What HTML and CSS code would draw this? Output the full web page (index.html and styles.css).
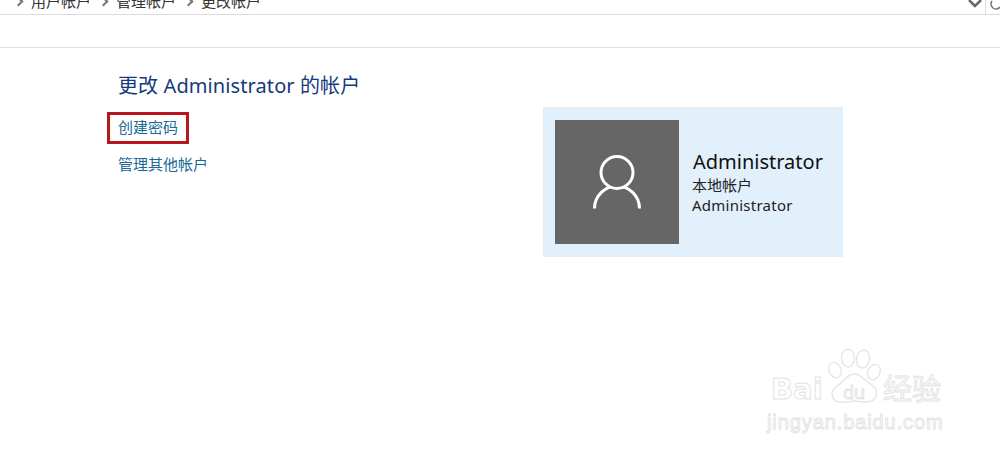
FILE: index.html
```html
<!DOCTYPE html>
<html lang="zh-CN">
<head>
    <meta charset="UTF-8">
    <title>更改帐户</title>
    <link rel="stylesheet" href="styles.css">
</head>
<body>

    <div class="address-bar">
        <nav class="crumbs">
            <span class="sep"></span>
            <span>用户帐户</span>
            <span class="sep"></span>
            <span>管理帐户</span>
            <span class="sep"></span>
            <span>更改帐户</span>
        </nav>
        <div class="bar-tools">
            <svg class="chevron" width="14" height="8" viewBox="0 0 14 8"><path d="M1 0l6 6 6-6" fill="none" stroke="#666" stroke-width="2.500"/></svg>
            <span class="tool-divider"></span>
            <svg class="refresh" width="10" height="10" viewBox="0 0 10 10"><path d="M10 7A5 5 0 0 1 2 1" fill="none" stroke="#777" stroke-width="1.500"/></svg>
        </div>
    </div>
    <div class="menu-bar"></div>

    <main class="page">
        <section class="tasks">
            <h1>更改 Administrator 的帐户</h1>
            <a href="#" class="task task-marked">创建密码</a>
            <a href="#" class="task">管理其他帐户</a>
        </section>
        <section class="user-card">
            <div class="avatar">
                <svg width="48" height="54" viewBox="0 0 48 54">
                    <path d="M1.5 53.500a22.500 22.500 0 0 1 45 0" fill="none" stroke="#fff" stroke-width="3"/>
                    <circle cx="24" cy="17.500" r="16" fill="#666" stroke="#fff" stroke-width="3"/>
                </svg>
            </div>
            <div class="user-info">
                <div class="user-name">Administrator</div>
                <div class="user-line">本地帐户</div>
                <div class="user-line user-login">Administrator</div>
            </div>
        </section>
    </main>

    <div class="watermark">
        <div class="wm-top">
            <span class="wm-bai">Bai</span>
            <svg class="wm-paw" width="56" height="58" viewBox="0 0 56 58">
                <g fill="#fff" stroke="#e4e4e4" stroke-width="1.3">
                    <ellipse cx="8" cy="22" rx="6" ry="8" transform="rotate(-25 8 22)"/>
                    <ellipse cx="21" cy="10" rx="6.500" ry="9"/>
                    <ellipse cx="36" cy="11" rx="6.500" ry="9" transform="rotate(12 36 11)"/>
                    <ellipse cx="47" cy="24" rx="6" ry="8" transform="rotate(25 47 24)"/>
                    <path d="M27 26c7 0 10 6 18 11 8 6 5 17-6 17-5 0-8-1-12-1s-7 2-13 1C4 54 2 44 10 38c7-4 10-12 17-12z"/>
                </g>
            </svg>
            <span class="wm-du">du</span>
            <span class="wm-cn">经验</span>
        </div>
        <div class="wm-url">jingyan.baidu.com</div>
    </div>

</body>
</html>
```

FILE: styles.css
```css
body {
    font-family: "Noto Sans", "Noto Sans CJK SC", sans-serif;
    background-color: #fff;
    margin: 0;
    height: 456px;
    overflow: hidden;
    position: relative;
}

.address-bar {
    height: 14px;
    border-bottom: 1px solid #dcdcdc;
    display: flex;
    justify-content: space-between;
    align-items: flex-end;
    overflow: hidden;
}

.crumbs {
    display: flex;
    align-items: center;
    gap: 9px;
    font-size: 15px;
    line-height: 20px;
    color: #333;
    margin-bottom: 3px;
    padding-left: 15px;
}

.sep {
    width: 5px;
    height: 5px;
    border-top: 2px solid #777;
    border-right: 2px solid #777;
    transform: rotate(45deg);
}

.bar-tools {
    display: flex;
    align-items: flex-start;
    height: 14px;
}

.chevron {
    margin-right: 3px;
}

.tool-divider {
    width: 1px;
    height: 14px;
    background-color: #ddd;
}

.refresh {
    margin-left: 4px;
}

.menu-bar {
    height: 32px;
    border-bottom: 1px solid #e3e3e3;
}

.page {
    display: flex;
}

.tasks {
    width: 425px;
    padding-left: 118px;
    padding-top: 25px;
    display: flex;
    flex-direction: column;
    align-items: flex-start;
}

.tasks h1 {
    margin: 0 0 13px;
    font-size: 20px;
    font-weight: normal;
    line-height: 26px;
    letter-spacing: 0.1px;
    color: #143a7c;
}

.task {
    font-size: 15px;
    line-height: 20px;
    color: #1b6a94;
    text-decoration: none;
}

.task-marked {
    border: 3px solid #b8161c;
    padding: 2px 8px 4px;
    margin: 0 0 10px -11px;
}

.user-card {
    width: 300px;
    height: 150px;
    margin-top: 59px;
    background-color: #e2f0fb;
    display: flex;
    align-items: center;
    gap: 13px;
    padding-left: 12px;
    box-sizing: border-box;
}

.avatar {
    width: 124px;
    height: 124px;
    background-color: #666;
    display: flex;
    justify-content: center;
    align-items: center;
}

.user-name {
    margin-left: 1px;
    font-size: 20px;
    line-height: 26px;
    color: #111;
}

.user-line {
    font-size: 15px;
    line-height: 20px;
    color: #222;
}

.user-login {
    letter-spacing: 0.25px;
}

/* faint logo stamped over the corner */
.watermark {
    position: absolute;
    left: 767px;
    top: 348px;
    width: 180px;
    color: #fff;
}

.wm-top {
    height: 60px;
    position: relative;
    -webkit-text-stroke: 1px #e4e4e4;
}

.wm-bai {
    position: absolute;
    left: 4px;
    top: 24px;
    font-family: "DejaVu Sans", sans-serif;
    font-weight: bold;
    font-size: 29px;
    line-height: 34px;
}

.wm-paw {
    position: absolute;
    left: 60px;
    top: 0;
}

.wm-du {
    position: absolute;
    left: 76px;
    top: 34px;
    font-size: 18px;
    line-height: 20px;
}

.wm-cn {
    position: absolute;
    left: 116px;
    top: 24px;
    font-size: 29px;
    line-height: 34px;
}

.wm-url {
    margin-top: 2px;
    font-family: "Liberation Sans", sans-serif;
    font-size: 20px;
    line-height: 24px;
    letter-spacing: 0.9px;
    -webkit-text-stroke: 1px #e4e4e4;
}
```
